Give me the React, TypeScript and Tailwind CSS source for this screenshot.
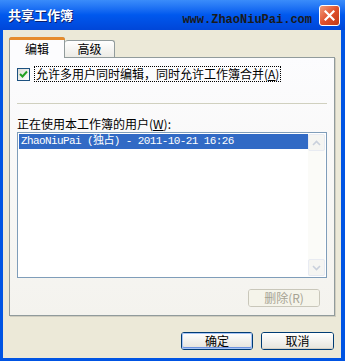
import React from 'react';

const cjk = { fontFamily: '"Noto Sans CJK SC", "Noto Sans", sans-serif' };
const mono = { fontFamily: '"Liberation Mono", "Noto Sans CJK SC", monospace' };

function XpButton({ children, primary = false, disabled = false, className = '' }: { children: React.ReactNode; primary?: boolean; disabled?: boolean; className?: string }) {
  return (
    <div
      className={`flex items-center justify-center rounded-[3px] border text-[12px] leading-none ${
        disabled ? 'border-[#c9c7ba] text-[#a6a393]' : 'border-[#003c74] text-black'
      } ${className}`}
      style={cjk}
    >
      <div
        className={`flex h-full w-full items-center justify-center rounded-[2px] ${
          disabled
            ? 'bg-[#f5f4ea]'
            : primary
              ? 'bg-gradient-to-b from-white to-[#e3e2da] shadow-[inset_0_0_0_1px_#a7c4f5,inset_0_-1px_0_1px_#6d93e0]'
              : 'bg-gradient-to-b from-white to-[#e6e4dc] shadow-[inset_0_-1px_0_#d6d0c5]'
        }`}
      >
        {children}
      </div>
    </div>
  );
}

function ScrollArrow({ up }: { up: boolean }) {
  return (
    <div className="flex h-[17px] w-[17px] items-center justify-center rounded-[2px] border border-[#e8ebf2] bg-[#f5f5f2]">
      <svg width="9" height="6" viewBox="0 0 9 6">
        <path d={up ? 'M1 5 L4.5 1.5 L8 5' : 'M1 1 L4.5 4.5 L8 1'} fill="none" stroke="#c9d0dc" strokeWidth="1.6" />
      </svg>
    </div>
  );
}

export default function App() {
  return (
    <div className="flex h-[361px] w-[345px] flex-col overflow-hidden bg-[#0054e3]" style={cjk}>
      {/* title bar */}
      <div className="relative flex h-[30px] items-center bg-gradient-to-b from-[#3a8cfa] via-[#0058ee] to-[#0046d8] pl-[8px] pr-[5px]">
        <span className="text-[13px] font-bold text-white [text-shadow:1px_1px_0_#0a1e6e]">共享工作簿</span>
        <span className="ml-auto mr-[7px] mt-[9px] text-[12px] font-bold leading-none text-[#1a1a1a]" style={mono}>
          www.ZhaoNiuPai.com
        </span>
        <div className="flex h-[21px] w-[21px] items-center justify-center rounded-[3px] border border-white bg-gradient-to-br from-[#f09a7a] via-[#e0502c] to-[#c03a16]">
          <svg width="11" height="11" viewBox="0 0 11 11">
            <path d="M1.5 1.5 L9.5 9.5 M9.5 1.5 L1.5 9.5" stroke="white" strokeWidth="2.2" strokeLinecap="square" />
          </svg>
        </div>
      </div>

      {/* body */}
      <div className="ml-[3px] mr-[4px] mb-[3px] flex flex-1 flex-col bg-[#ece9d8] px-[6px] pt-[7px]">
        {/* tabs */}
        <div className="flex items-end">
          <div className="relative z-10 -mb-px flex h-[21px] w-[56px] flex-col rounded-t-[3px] border border-b-0 border-[#919b9c] bg-[#fcfcfe]">
            <div className="-mx-px -mt-px h-[3px] rounded-t-[3px] bg-[#e68b2c]" />
            <div className="flex flex-1 items-center justify-center text-[12px] leading-none text-black">编辑</div>
          </div>
          <div className="flex h-[17px] w-[50px] items-center justify-center rounded-t-[3px] border border-b-0 border-l-0 border-[#919b9c] bg-gradient-to-b from-white to-[#ecebe6] text-[12px] leading-none text-black">
            高级
          </div>
        </div>

        {/* panel */}
        <div className="flex h-[259px] flex-col border border-[#919b9c] bg-gradient-to-b from-[#fcfcfe] to-[#f4f3ee] px-[7px] pt-[8px] shadow-[1px_1px_0_#d0cdbf]">
          <div className="flex items-center gap-[4px]">
            <div className="flex h-[13px] w-[13px] items-center justify-center border border-[#1c5180] bg-gradient-to-br from-[#dcdcd7] to-white">
              <svg width="9" height="8" viewBox="0 0 9 8">
                <path d="M1 4 L3.5 6.5 L8 1.5" fill="none" stroke="#21a121" strokeWidth="2" />
              </svg>
            </div>
            <span className="border border-dotted border-black px-[1px] text-[12px] leading-[14px] text-black">
              允许多用户同时编辑，同时允许工作簿合并(<span className="underline">A</span>)
            </span>
          </div>

          <div className="mt-[21px] h-px bg-[#d0d0bf]" />

          <div className="mt-[13px] text-[12px] leading-[14px] text-black">
            正在使用本工作簿的用户(<span className="underline">W</span>):
          </div>

          <div className="mt-[1px] flex h-[146px] border border-[#7f9db9] bg-white p-px">
            <div className="flex-1">
              <div className="flex h-[15px] items-center bg-[#316ac5] pl-[2px] text-[11px] leading-none tracking-[-0.6px] text-white" style={mono}>
                ZhaoNiuPai (独占) - 2011-10-21 16:26
              </div>
            </div>
            <div className="flex w-[17px] flex-col justify-between bg-[#fbfbf8]">
              <ScrollArrow up />
              <ScrollArrow up={false} />
            </div>
          </div>

          <div className="mt-[11px] flex justify-end pr-[7px]">
            <XpButton disabled className="h-[18px] w-[72px]">
              删除(R)
            </XpButton>
          </div>
        </div>

        {/* footer buttons */}
        <div className="mt-[16px] flex justify-end gap-[8px] pr-[1px]">
          <XpButton primary className="h-[18px] w-[72px]">
            确定
          </XpButton>
          <XpButton className="h-[18px] w-[73px]">取消</XpButton>
        </div>
      </div>
    </div>
  );
}
